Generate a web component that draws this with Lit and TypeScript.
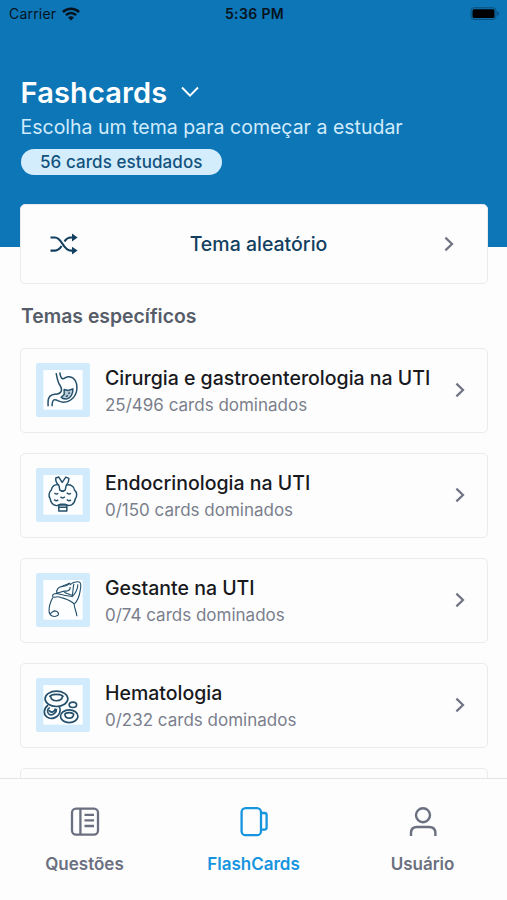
import { LitElement, html, css, svg } from "lit";
import { customElement } from "lit/decorators.js";

const chevronRight = html`<svg class="chev" viewBox="0 0 12 18" width="12" height="18">
  <path d="M2.4 2.6 L9 9 L2.4 15.4" fill="none" stroke="currentColor" stroke-width="2.2" />
</svg>`;

const stomach = svg`
  <path d="M110 86 C112 97 114 106 117 114 C120 122 128 128 126 138 C124 148 116 149 106 149 C92 150 87 159 86 169 V185" />
  <path d="M121 84 C122 94 125 101 129 103 C137 104 137 96 149 97 C166 99 173 115 172 132 C171 154 155 172 132 173 C120 173 112 164 104 166 C99 168 98 174 98 185" />
  <path d="M134 135 L146 138 L160 133 C161 147 154 160 143 163 C135 164 128 162 125 158 L134 150 Z" fill="#b9cbd6" />
  <path d="M146 147 L151 144 M139 156 L145 153" />`;

const thyroid = svg`
  <path d="M109 86 L118 83 L128 99 L139 83 L148 87 C149 97 144 103 140 108 L137 122 C131 126 126 126 121 122 L119 110 C112 102 107 96 109 86 Z" />
  <path d="M119 106 C107 104 97 110 96 121 C88 127 87 141 92 147 C94 158 100 166 110 168 C116 169 119 166 123 164 H137 C142 168 150 169 157 165 C164 161 166 155 167 148 C173 142 173 128 165 122 C164 111 153 104 140 107" />
  <path d="M118 166 H142 V184 H118 Z M118 173 H142" />
  <path d="M105 130 Q110 137 116 131 M142 130 Q148 137 154 131 M123 142 Q129 149 136 142 M104 150 Q110 157 116 151 M142 150 Q148 157 154 151 M125 125 H134" />`;

const pregnant = svg`
  <path d="M112 118 C110 106 117 98 128 96 C134 95 143 96 150 86" />
  <path d="M126 97 C134 91 143 89 153 86" />
  <path d="M112 116 C121 115 128 109 140 110 C146 110 152 108 152 98 M134 112 C138 117 148 118 157 122" />
  <path d="M150 92 C158 85 170 81 179 83 C186 86 184 97 182 107 C180 122 175 138 164 149" />
  <path d="M163 88 C160 99 161 110 158 125" />
  <path d="M164 149 C154 136 136 133 122 128 C114 125 108 129 101 128 C96 123 102 117 112 117 C124 120 140 124 158 126 C167 118 174 104 175 90" />
  <path d="M100 129 C93 142 88 155 89 171 C90 185 104 189 114 183 C121 178 115 169 105 169 C98 170 97 177 91 177" />
  <path d="M164 149 C164 161 170 168 172 185" />`;

const cells = svg`
  <ellipse cx="111" cy="118" rx="34" ry="23" />
  <path d="M91 113 C92 102 130 102 131 113 M94 111 C95 128 127 128 129 111" />
  <path d="M86 137 C73 145 71 164 82 172 C96 183 119 173 122 153 C123 148 121 144 118 141" />
  <path d="M91 144 C83 148 82 160 90 165 C101 169 112 158 111 148 M89 152 C95 162 106 157 108 147" />
  <ellipse cx="149" cy="170" rx="26" ry="19" />
  <path d="M135 166 C137 157 161 157 163 166 M136 165 C138 179 160 179 162 165" />
  <ellipse cx="160" cy="136" rx="11" ry="8" />`;

const topics = [
  { title: "Cirurgia e gastroenterologia na UTI", sub: "25/496 cards dominados", art: stomach, w: 4.4 },
  { title: "Endocrinologia na UTI", sub: "0/150 cards dominados", art: thyroid, w: 4.4 },
  { title: "Gestante na UTI", sub: "0/74 cards dominados", art: pregnant, w: 3.3 },
  { title: "Hematologia", sub: "0/232 cards dominados", art: cells, w: 5 },
];

@customElement("app-root")
export class AppRoot extends LitElement {
  static styles = css`
    :host {
      display: flex;
      flex-direction: column;
      width: 507px;
      height: 900px;
      overflow: hidden;
      background: #fdfdfe;
      font-family: Inter, "Liberation Sans", sans-serif;
      white-space: nowrap;
    }
    * { box-sizing: border-box; }
    svg { display: block; flex: none; }
    .header { flex: none; height: 247px; background: #0d76b7; }
    .status {
      display: grid;
      grid-template-columns: 1fr auto 1fr;
      align-items: center;
      height: 27px;
      padding: 0 7px 0 9px;
      color: #06131d;
    }
    .carrier { display: flex; align-items: center; gap: 6px; font-size: 14px; letter-spacing: 0.2px; }
    .time { font-size: 14px; font-weight: 600; letter-spacing: 0.35px; }
    .battery { justify-self: end; }
    .head { padding: 45px 20.5px 0; }
    .title { display: flex; align-items: center; gap: 13.5px; height: 40px; color: #fff; }
    .title-text { font-size: 29px; font-weight: 600; letter-spacing: 0.14px; }
    .lead { height: 30px; line-height: 31px; font-size: 19.5px; color: #d0ebfb; }
    .pill {
      width: 201.5px;
      height: 26px;
      margin-top: 6.5px;
      border-radius: 13px;
      background: #d3edfd;
      color: #12527d;
      font-size: 17px;
      font-weight: 500;
      letter-spacing: 0.08px;
      line-height: 27px;
      text-align: center;
    }
    .main { flex: 1; min-height: 0; overflow: hidden; margin-top: -43px; padding: 0 19px 0 20px; }
    .card { border: 1.5px solid #e9ebef; border-radius: 5px; background: #fdfdfe; }
    .random {
      display: grid;
      grid-template-columns: 30px 1fr 17px;
      align-items: center;
      height: 80px;
      padding: 0 32px 0 28px;
      color: #123f5f;
    }
    .random-text { text-align: center; font-size: 19.5px; font-weight: 500; }
    .random .chev { justify-self: end; }
    .chev { color: #6f7382; }
    .section { margin: 17px 0 16.5px 1px; height: 30px; line-height: 31px; font-size: 19.4px; font-weight: 600; color: #575c69; }
    .topic { display: flex; align-items: center; height: 85px; margin-bottom: 20px; padding: 0 21px 0 15px; }
    .thumb { width: 54px; height: 54px; margin-right: 15px; border-radius: 2px; }
    .text { flex: 1; padding-top: 1px; }
    .name { height: 28px; line-height: 28px; font-size: 19.5px; font-weight: 500; color: #18191d; }
    .sub { height: 26px; line-height: 26px; font-size: 17px; color: #7b7f8c; }
    .tabs {
      flex: none;
      display: grid;
      grid-template-columns: repeat(3, 1fr);
      height: 122px;
      border-top: 1.5px solid #e3e5e9;
      background: #fdfdfe;
    }
    .tab { display: flex; flex-direction: column; align-items: center; padding-top: 25px; color: #6b7080; }
    .tab.on { color: #1695de; }
    .label { margin-top: 13px; height: 26px; line-height: 26px; font-size: 17px; font-weight: 600; }
  `;

  render() {
    return html`
      <div class="header">
        <div class="status">
          <div class="carrier">
            <span>Carrier</span>
            <svg width="18" height="14" viewBox="0 0 18 14">
              <g fill="none" stroke="currentColor" stroke-width="2.5">
                <path d="M0.9 5 C5.4 0.5 12.6 0.5 17.1 5" />
                <path d="M3.9 8.1 C6.8 5.2 11.2 5.2 14.1 8.1" />
              </g>
              <path d="M6 10.5 C7.7 8.9 10.3 8.9 12 10.5 L9 13.6 Z" fill="currentColor" />
            </svg>
          </div>
          <span class="time">5:36 PM</span>
          <svg class="battery" width="30" height="14" viewBox="0 0 30 14">
            <rect x="1" y="0.8" width="25" height="11.6" rx="3" fill="none" stroke="#0b4d77" stroke-width="1" />
            <rect x="2.5" y="2.3" width="22" height="8.6" rx="1.5" fill="#000" />
            <path d="M27.3 4.6 C29.5 5.3 29.5 8.1 27.3 8.8 Z" fill="#0b4d77" />
          </svg>
        </div>
        <div class="head">
          <div class="title">
            <span class="title-text">Fashcards</span>
            <svg width="18" height="12" viewBox="0 0 18 12">
              <path d="M1 1.5 L9 9.7 L17 1.5" fill="none" stroke="currentColor" stroke-width="1.9" />
            </svg>
          </div>
          <div class="lead">Escolha um tema para começar a estudar</div>
          <div class="pill">56 cards estudados</div>
        </div>
      </div>
      <div class="main">
        <div class="card random">
          <svg width="30" height="24" viewBox="0 0 30 24">
            <g fill="none" stroke="currentColor" stroke-width="2.2">
              <path d="M1.5 5.5 H6 C13.5 5.5 13.5 18.6 22 18.6 H25" />
              <path d="M1.5 18.6 H6 C9.5 18.6 11 16.5 12.6 14 M15.5 9.5 C17 7 18.8 5.5 22 5.5 H25" />
            </g>
            <path d="M23 1.6 L28.6 5.6 L23 9.4 Z M23 14.7 L28.6 18.6 L23 22.4 Z" fill="currentColor" />
          </svg>
          <span class="random-text">Tema aleatório</span>
          ${chevronRight}
        </div>
        <div class="section">Temas específicos</div>
        ${topics.map(
          (t) => html`<div class="card topic">
            <svg class="thumb" viewBox="50 56 161 161">
              <rect x="50" y="56" width="161" height="161" fill="#d1ebfd" />
              <rect x="72" y="77" width="117" height="118" fill="#fdfeff" />
              <g fill="none" stroke="#24506b" stroke-width=${t.w} stroke-linejoin="round">${t.art}</g>
            </svg>
            <div class="text">
              <div class="name">${t.title}</div>
              <div class="sub">${t.sub}</div>
            </div>
            ${chevronRight}
          </div>`
        )}
        <div class="card topic"></div>
      </div>
      <div class="tabs">
        <div class="tab">
          <svg width="34" height="34" viewBox="0 0 34 34" fill="none" stroke="currentColor" stroke-width="2.3">
            <rect x="4" y="4.6" width="26" height="26" rx="4" />
            <path d="M12.4 4.6 V30.6 M16.5 10.8 H26 M16.5 16.4 H26 M16.5 22 H26" />
          </svg>
          <span class="label">Questões</span>
        </div>
        <div class="tab on">
          <svg width="34" height="34" viewBox="0 0 34 34" fill="none" stroke="currentColor" stroke-width="2.3">
            <rect x="4.6" y="4.2" width="19.4" height="27" rx="4" />
            <path d="M24 9 H27.5 Q29.6 9 29.6 11 V23.6 Q29.6 25.6 27.5 25.6 H24" />
          </svg>
          <span class="label">FlashCards</span>
        </div>
        <div class="tab">
          <svg width="34" height="34" viewBox="0 0 34 34" fill="none" stroke="currentColor" stroke-width="2.4">
            <circle cx="17" cy="11.2" r="7" />
            <path d="M5 32 V29 Q5 23 11 23 H23 Q29.4 23 29.4 29 V32" />
          </svg>
          <span class="label">Usuário</span>
        </div>
      </div>
    `;
  }
}
